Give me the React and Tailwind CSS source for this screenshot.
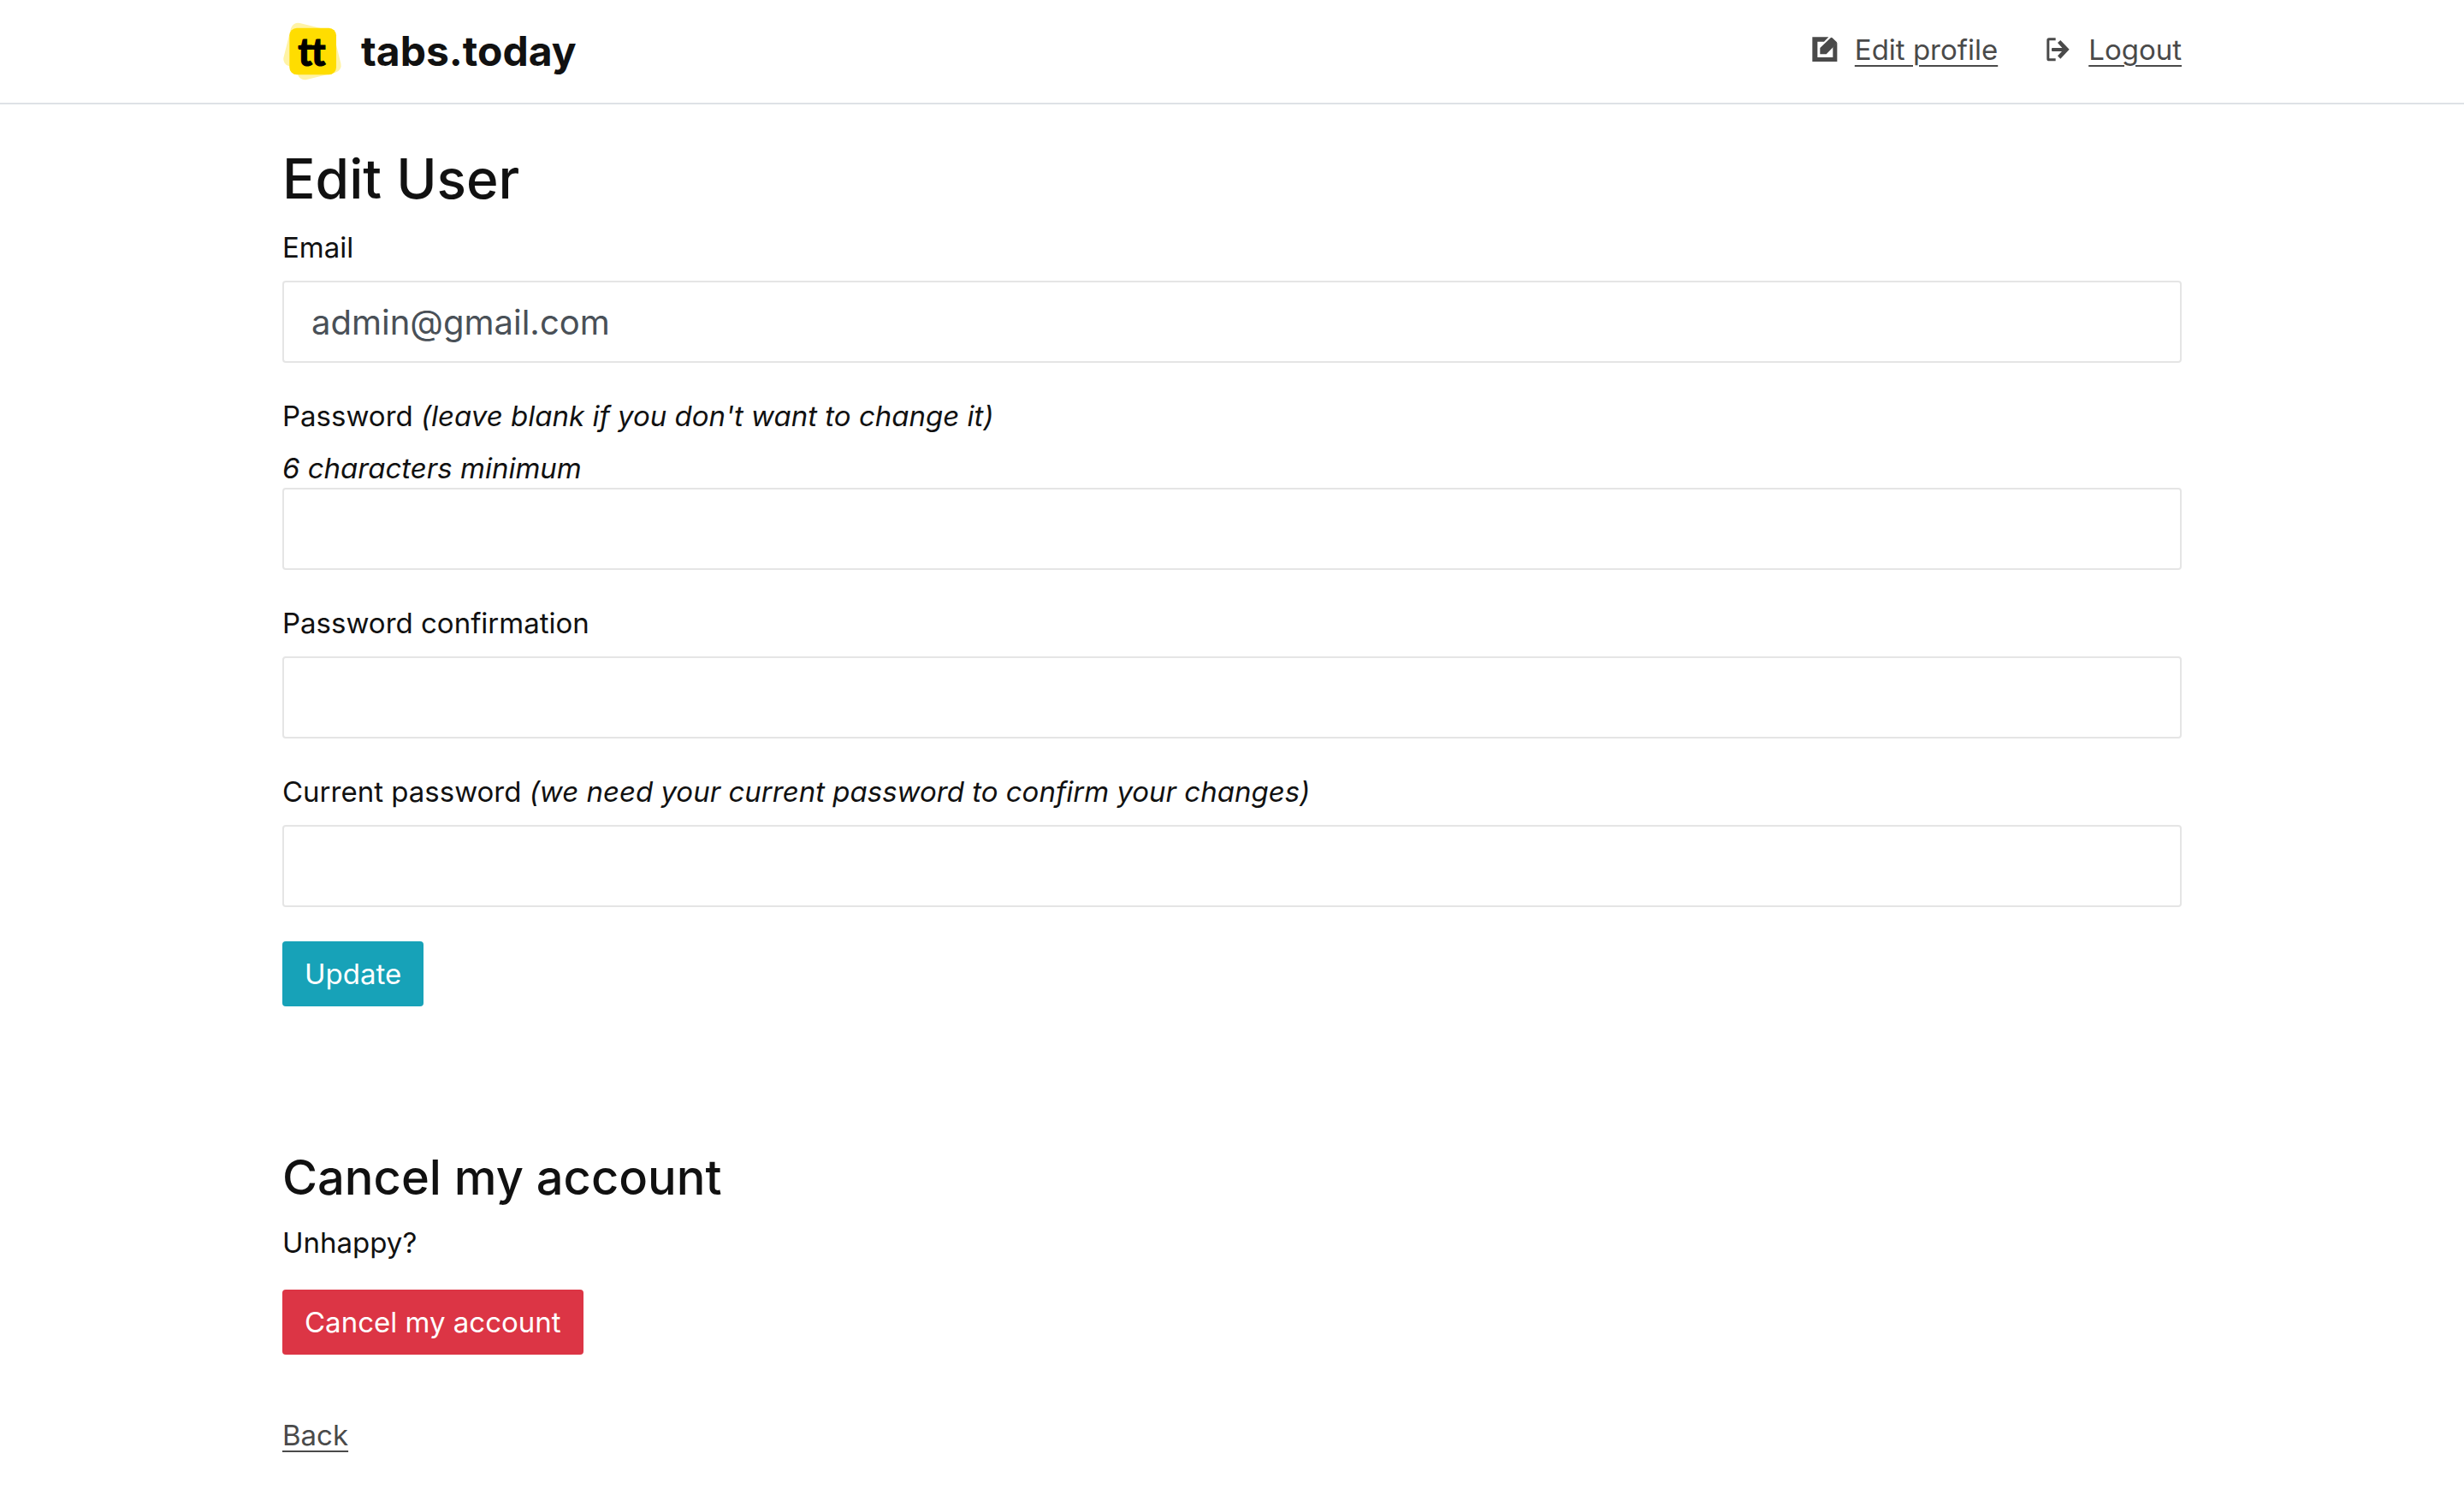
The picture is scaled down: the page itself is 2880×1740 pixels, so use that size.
function Logo() {
  return (
    <svg viewBox="30 72 216 220" className="h-[74px] w-[72px]" aria-hidden="true">
      <rect x="45" y="93" width="156" height="156" rx="26" fill="#fff3a6" transform="rotate(14 123 171)" />
      <rect x="69" y="115" width="156" height="156" rx="26" fill="#fff3a6" transform="rotate(-14 147 193)" />
      <rect x="55" y="100" width="164" height="164" rx="26" fill="#ffdd00" />
      <text
        x="85 131"
        y="233"
        fill="#000"
        stroke="#000"
        strokeWidth="3"
        fontSize="134"
        fontWeight="900"
        fontFamily="Lato, sans-serif"
      >
        tt
      </text>
    </svg>
  );
}

function EditIcon() {
  return (
    <svg viewBox="77 131 90 90" className="size-[30px]" fill="currentColor" aria-hidden="true">
      <path d="M78 132H135L119 148H96V203H150V167L165 152V218H78Z" />
      <path d="M105 192V170L142 135Q145 132 148 135L163 149Q166 152 163 155L127 192Z" />
    </svg>
  );
}

function LogoutIcon() {
  return (
    <svg viewBox="926 131 90 90" className="size-[30px]" aria-hidden="true">
      <path d="M961 139.500H938Q934.500 139.500 934.500 143V208Q934.500 211.500 938 211.500H961" fill="none" stroke="currentColor" strokeWidth="9" />
      <path d="M968 152L978 143L1009 175L978 208L968 198L983 182H950Q947 182 947 179V173Q947 170 950 170H984Z" fill="currentColor" />
    </svg>
  );
}

const linkText = "text-[#4a4a4a] underline decoration-2 underline-offset-[6px]";

function Field({ id, label, hint, note, type = "password", value }) {
  return (
    <div className="mb-10">
      <label htmlFor={id} className="block pb-4">
        {label} {hint && <i>{hint}</i>}
      </label>
      {note && <em className="block">{note}</em>}
      <input
        id={id}
        type={type}
        defaultValue={value}
        className="block h-24 w-full rounded-[4px] border-2 border-[#e5e5e5] bg-white px-8 text-[40px] text-[#495057]"
      />
    </div>
  );
}

function Button({ children, color }) {
  return (
    <button type="button" className={`block h-[76px] rounded-[4px] px-[26px] text-white ${color}`}>
      {children}
    </button>
  );
}

export default function App() {
  return (
    <div className="bg-white font-[Inter,sans-serif] text-[33px] leading-[45px] text-[#111]">
      <header className="border-b-2 border-[#dee2e6]">
        <div className="mx-auto flex h-[120px] max-w-[2220px] items-center justify-between">
          <a href="#home" className="flex items-center gap-5 text-[48px] leading-[72px] font-bold">
            <Logo />
            tabs.today
          </a>
          <nav className="flex items-center gap-14 pb-1">
            <div className="flex items-center gap-5 text-[#4a4a4a]">
              <EditIcon />
              <a href="#profile" className={linkText}>Edit profile</a>
            </div>
            <div className="flex items-center gap-5 text-[#4a4a4a]">
              <LogoutIcon />
              <a href="#logout" className={linkText}>Logout</a>
            </div>
          </nav>
        </div>
      </header>
      <main className="mx-auto max-w-[2220px] pt-12 pb-8">
        <h1 className="mb-5 text-[64px] leading-[77px] font-medium">Edit User</h1>
        <form>
          <Field id="email" label="Email" type="email" value="admin@gmail.com" />
          <Field
            id="password"
            label="Password"
            hint="(leave blank if you don't want to change it)"
            note="6 characters minimum"
          />
          <Field id="confirmation" label="Password confirmation" />
          <Field
            id="current"
            label="Current password"
            hint="(we need your current password to confirm your changes)"
          />
          <Button color="bg-[#17a2b8]">Update</Button>
        </form>
        <h2 className="mt-[167px] mb-5 text-[56px] leading-[67px] font-medium">Cancel my account</h2>
        <p className="mb-8">Unhappy?</p>
        <Button color="bg-[#dc3545]">Cancel my account</Button>
        <div className="mt-[72px]">
          <a href="#back" className={linkText}>Back</a>
        </div>
      </main>
    </div>
  );
}
